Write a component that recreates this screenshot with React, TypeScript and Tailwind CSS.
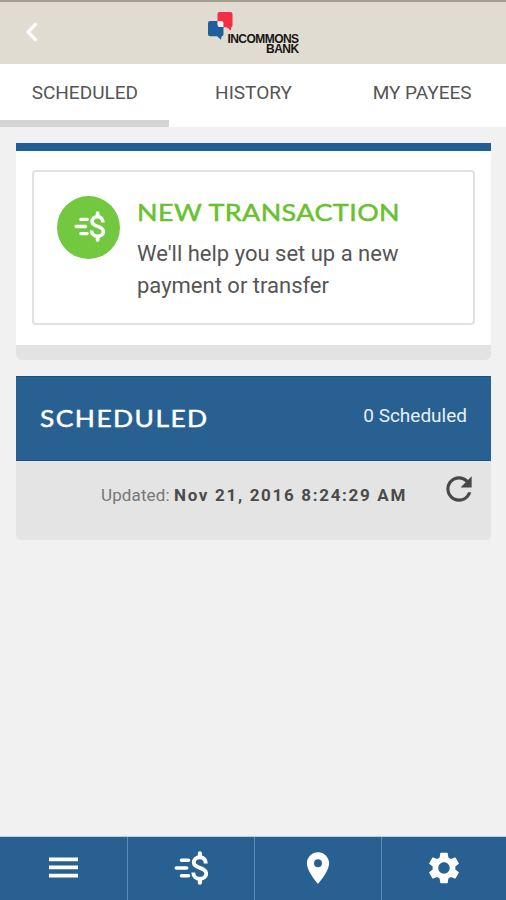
import React from "react";
import { MdChevronLeft, MdPlace, MdRefresh, MdSettings } from "react-icons/md";

interface IconProps {
  className?: string;
}

const TABS = [
  { label: "SCHEDULED", active: true },
  { label: "HISTORY", active: false },
  { label: "MY PAYEES", active: false },
];

// Dollar sign with three speed lines on its left
function TransferIcon({ className }: IconProps) {
  return (
    <svg viewBox="0 0 34 34" fill="none" stroke="currentColor" className={className}>
      <path d="M7.5 9.2h7M2.3 17h10.4M7.5 24.8h7" strokeWidth="3.6" strokeLinecap="round" />
      <path
        d="M31.8 12.6c0-3.9-2.5-6.4-6-6.4s-6 2.3-6 5.3c0 6.6 12.4 4.2 12.4 11 0 3.1-2.8 5.3-6.4 5.3s-6.5-2.5-6.5-6.4"
        strokeWidth="3.9"
      />
      <path d="M25.9 2.3v3.5M25.9 28.2v3.5" strokeWidth="4.2" strokeLinecap="round" />
    </svg>
  );
}

function MenuIcon({ className }: IconProps) {
  return (
    <svg viewBox="0 0 29 21" fill="currentColor" className={className}>
      <path d="M0 0.5h29v3.7H0zM0 8.5h29v3.7H0zM0 16.7h29v3.7H0z" />
    </svg>
  );
}

function Logo() {
  return (
    <div className="flex h-[42px] w-[91px] items-start">
      <svg viewBox="0 0 25 28" className="h-7 w-[25px] shrink-0">
        <path d="M11.5 0h11a2 2 0 0 1 2 2v11.5a2 2 0 0 1-1.2 1.8l-.5 3.2-4-3.2H11.5a2 2 0 0 1-2-2V2a2 2 0 0 1 2-2z" fill="#f52d45" />
        <path d="M2 9h11.5a2 2 0 0 1 2 2v11.2a2 2 0 0 1-1.8 2l-.8 3.6-3.8-3.6H2a2 2 0 0 1-2-2V11a2 2 0 0 1 2-2z" fill="#215f9c" />
        <path d="M9.5 9h4a2 2 0 0 1 2 2v4h-4a2 2 0 0 1-2-2z" fill="#f3efe9" />
      </svg>
      <div className="-ml-[7px] mt-[22px] flex w-[73px] flex-col items-end font-['Liberation_Sans',sans-serif] text-[12px] font-bold leading-[10px] tracking-[-0.55px] text-[#171412]">
        <span className="whitespace-nowrap">INCOMMONS</span>
        <span>BANK</span>
      </div>
    </div>
  );
}

function NewTransactionCard() {
  return (
    <section className="overflow-hidden rounded-b-[5px] border-t-8 border-[#205f95] bg-white">
      <div className="px-4 pb-5 pt-[19px]">
        <button
          type="button"
          className="flex h-[155px] w-full rounded border-2 border-[#e1e1e1] pl-[23px] pt-6 text-left"
        >
          <span className="flex size-[63px] shrink-0 items-center justify-center rounded-full bg-[#72c83f] text-white">
            <TransferIcon className="mb-[3px] ml-0.5 size-[31px]" />
          </span>
          <span className="ml-[17px] flex flex-col">
            <span className="origin-left scale-x-[1.12] whitespace-nowrap font-[Lato,sans-serif] text-2xl font-normal leading-8 tracking-[0.4px] text-[#69c12e] [-webkit-text-stroke:0.5px]">
              NEW TRANSACTION
            </span>
            <span className="mt-2.5 w-[290px] text-[22px] leading-[31.5px] text-[#555]">
              We'll help you set up a new payment or transfer
            </span>
          </span>
        </button>
      </div>
      <div className="h-[15px] bg-[#e3e3e3]" />
    </section>
  );
}

function ScheduledCard() {
  return (
    <section className="mt-4 overflow-hidden rounded-b-[5px] bg-[#e4e4e4]">
      <header className="flex h-[85px] items-center justify-between border-y border-[#14558a] bg-[#286191] pl-6 pr-6 text-white">
        <h2 className="mb-0.5 origin-left scale-x-[1.1] font-[Lato,sans-serif] text-[24px] font-normal tracking-[1.3px] [-webkit-text-stroke:0.5px]">
          SCHEDULED
        </h2>
        <span className="mb-1 text-[19px] text-[#e6effa]">0 Scheduled</span>
      </header>
      <div className="flex h-[79px] items-start justify-end pr-[13px]">
        <p className="mt-[22px] whitespace-nowrap text-[17px] leading-6 text-[#777]">
          <span className="tracking-[0.12px]">Updated: </span>
          <strong className="font-bold tracking-[1.68px] text-[#4b4b4b]">Nov 21, 2016 8:24:29 AM</strong>
        </p>
        <MdRefresh className="ml-[33px] mt-[9px] size-[38px] text-[#484848]" />
      </div>
    </section>
  );
}

export default function App() {
  return (
    <div className="flex h-[900px] w-[506px] flex-col overflow-hidden bg-[#f1f1f1] font-[Roboto,sans-serif]">
      <header className="relative flex h-16 shrink-0 justify-center border-t-2 border-[#a39c91] bg-[#e1dcd1] pt-2.5">
        <MdChevronLeft className="absolute left-[13px] top-[11px] size-[38px] text-white" />
        <Logo />
      </header>

      <nav className="grid h-[63px] shrink-0 grid-cols-3 bg-white">
        {TABS.map((tab) => (
          <button
            key={tab.label}
            type="button"
            className={[
              "border-b-[7px] pl-px pt-[3px] text-[19px] font-normal text-[#555]",
              tab.active ? "border-[#d5d5d5]" : "border-transparent",
            ].join(" ")}
          >
            {tab.label}
          </button>
        ))}
      </nav>

      <main className="flex-1 pl-4 pr-[15px] pt-4">
        <NewTransactionCard />
        <ScheduledCard />
      </main>

      <nav className="grid h-16 shrink-0 grid-cols-[128px_127px_127px_124px] divide-x divide-[#5b8db8] border-t border-[#b9d0e2] bg-[#286191] text-white">
        <button type="button" className="flex items-center justify-center pb-0.5">
          <MenuIcon className="h-[21px] w-[29px]" />
        </button>
        <button type="button" className="flex items-center justify-center pb-0.5">
          <TransferIcon className="size-[34px]" />
        </button>
        <button type="button" className="flex items-center justify-center pb-0.5">
          <MdPlace className="size-[38px]" />
        </button>
        <button type="button" className="flex items-center justify-center pb-0.5">
          <MdSettings className="size-[38px]" />
        </button>
      </nav>
    </div>
  );
}
